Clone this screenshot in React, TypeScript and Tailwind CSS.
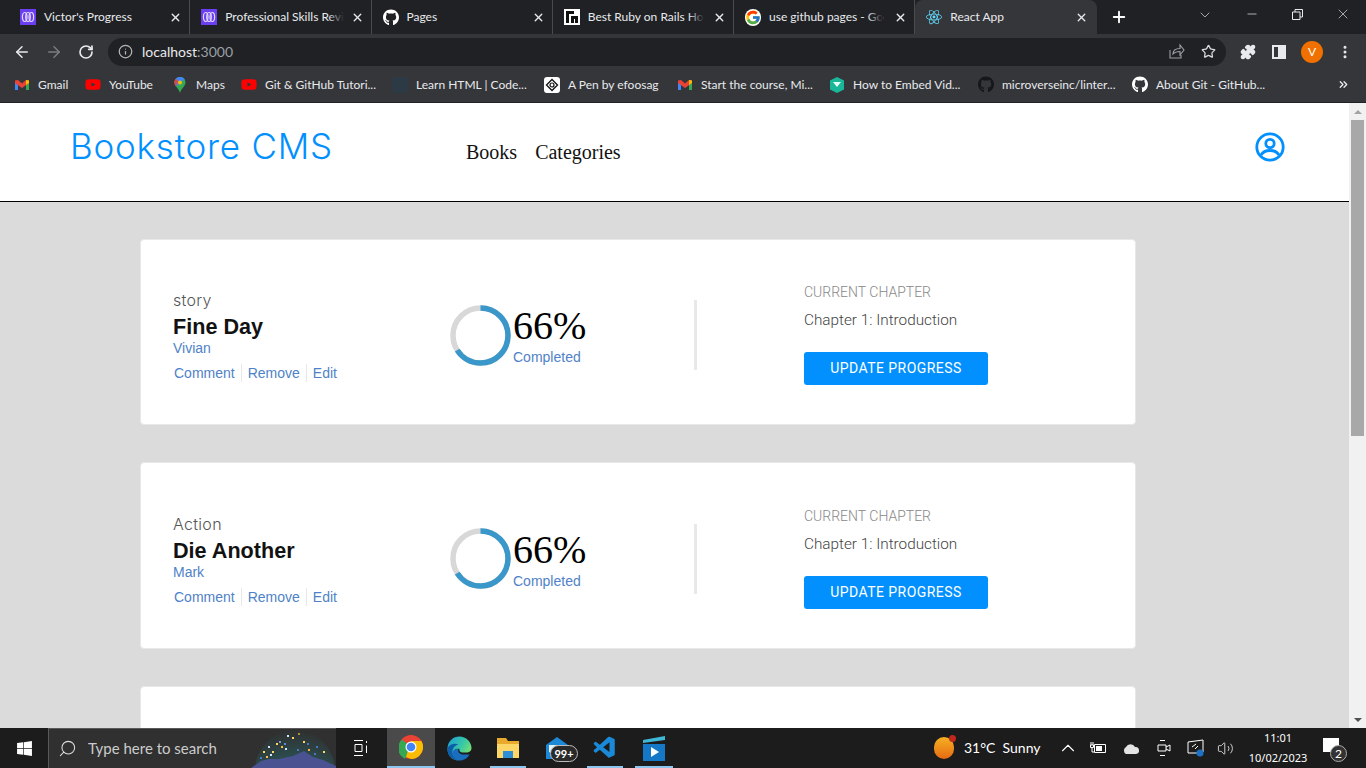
import { ReactNode } from 'react'
import { ArrowLeft, ArrowRight, RotateCw, Info, Star, Puzzle, MoreVertical, X, Plus, ChevronDown, Minus, ChevronsRight, Search, ChevronUp, Volume2 } from 'lucide-react'
import { FaGithub, FaWindows, FaYoutube } from 'react-icons/fa'
import { FcGoogle } from 'react-icons/fc'
import { SiReact } from 'react-icons/si'
import { VscVscode } from 'react-icons/vsc'

const ui = "font-['Lato',sans-serif]"

function Muo() {
    return (
        <svg width="16" height="16" viewBox="0 0 16 16">
            <rect width="16" height="16" fill="#6b3ff0" />
            <g fill="none" stroke="#e4dcff" strokeWidth="1.200">
                <ellipse cx="4.700" cy="8" rx="2.300" ry="4.500" />
                <ellipse cx="8" cy="8" rx="2.300" ry="4.500" />
                <ellipse cx="11.300" cy="8" rx="2.300" ry="4.500" />
            </g>
        </svg>
    )
}

function Rails() {
    return (
        <svg width="16" height="16" viewBox="0 0 16 16">
            <rect width="16" height="16" fill="#fff" />
            <path d="M2 14V2h8v3H5v9zM7 14V7h7v7h-3v-4H10v4z" fill="#111" />
        </svg>
    )
}

function Gmail() {
    return (
        <svg width="16" height="16" viewBox="0 0 16 16">
            <path d="M1 4v9h3V7z" fill="#4285f4" />
            <path d="M15 4v9h-3V7z" fill="#34a853" />
            <path d="M1 3.500 4 3l4 3.500L12 3l3 .5V6l-7 5-7-5z" fill="#ea4335" />
            <path d="M12 3l3 .5V6l-3 2z" fill="#fbbc04" />
        </svg>
    )
}

function MapsPin() {
    return (
        <svg width="16" height="18" viewBox="0 0 16 18">
            <path d="M8 1C4.500 1 2.500 3.500 2.500 6.500 2.500 10 6.500 12 8 17c1.500-5 5.500-7 5.500-10.500C13.500 3.500 11.500 1 8 1z" fill="#34a853" />
            <path d="M8 1c2 0 3.700.9 4.700 2.300L4 10.500c-1-1.200-1.500-2.500-1.500-4C2.500 3.500 4.500 1 8 1z" fill="#4285f4" />
            <path d="M3.800 2.800 6 5 4 10.300c-1-1.200-1.500-2.300-1.500-3.800 0-1.500.4-2.700 1.300-3.700z" fill="#ea4335" />
            <circle cx="8" cy="6.500" r="2" fill="#fbbc04" />
        </svg>
    )
}

function Pen() {
    return (
        <svg width="16" height="16" viewBox="0 0 16 16">
            <rect width="16" height="16" rx="3" fill="#fff" />
            <path d="M8 2.500 13.500 8 8 13.500 2.500 8z" fill="none" stroke="#111" strokeWidth="1.300" />
            <circle cx="8" cy="8" r="2" fill="none" stroke="#111" strokeWidth="1.200" />
        </svg>
    )
}

function Teal() {
    return (
        <svg width="16" height="18" viewBox="0 0 16 18">
            <path d="M8 1l7 3.500v9L8 17l-7-3.500v-9z" fill="#19b799" />
            <path d="M4 6h8L8 11z" fill="#e6fff8" />
        </svg>
    )
}

const tabs = [
    { icon: <Muo />, label: "Victor's Progress" },
    { icon: <Muo />, label: 'Professional Skills Revi', fade: true },
    { icon: <FaGithub size={17} color="#fff" />, label: 'Pages' },
    { icon: <Rails />, label: 'Best Ruby on Rails Ho', fade: true },
    { icon: <FcGoogle size={17} className="rounded-full bg-white" />, label: 'use github pages - Go', fade: true },
]

const bookmarks = [
    { icon: <Gmail />, label: 'Gmail', w: 71 },
    { icon: <FaYoutube size={17} color="#f00" />, label: 'YouTube', w: 87 },
    { icon: <MapsPin />, label: 'Maps', w: 69 },
    { icon: <FaYoutube size={17} color="#f00" />, label: 'Git & GitHub Tutori...', w: 151 },
    { icon: <span className="block w-4 h-4 bg-[#2b3a44] rounded-sm" />, label: 'Learn HTML | Code...', w: 152 },
    { icon: <Pen />, label: 'A Pen by efoosag', w: 133 },
    { icon: <Gmail />, label: 'Start the course, Mi...', w: 152 },
    { icon: <Teal />, label: 'How to Embed Vid...', w: 149 },
    { icon: <FaGithub size={17} color="#16171a" />, label: 'microverseinc/linter...', w: 154 },
    { icon: <FaGithub size={17} color="#fff" />, label: 'About Git - GitHub...', w: 150 },
]

function Tab({ icon, label, fade }: { icon: ReactNode; label: string; fade?: boolean }) {
    return (
        <div className="w-[181.25px] h-[34px] flex items-center pl-[11px] pr-[7px] border-r border-[#4a4b4f] shrink-0">
            <span className="w-4 h-4 flex items-center justify-center shrink-0">{icon}</span>
            <span className="relative ml-2 flex-1 text-xs text-[#e8eaed] whitespace-nowrap">
                <span className="relative inline-block">
                    {label}
                    {fade && <span className="absolute right-0 top-0 bottom-0 w-[16px] bg-gradient-to-r from-transparent to-[#202124]" />}
                </span>
            </span>
            <X size={13} strokeWidth={2.500} className="text-[#e8eaed] ml-1 shrink-0" />
        </div>
    )
}

function ChromeBar() {
    return (
        <div className={`${ui} shrink-0`}>
            <div className="h-[34px] bg-[#202124] flex pl-[9px]">
                {tabs.map((t, i) => <Tab key={i} {...t} />)}
                <div className="w-[182px] h-[34px] mt-0 bg-[#35363a] rounded-t-lg flex items-center pl-[11px] pr-[9px]">
                    <SiReact size={16} color="#61dafb" className="shrink-0" />
                    <span className="ml-2 flex-1 text-xs text-[#e8eaed]">React App</span>
                    <X size={13} strokeWidth={2.500} className="text-[#e8eaed]" />
                </div>
                <Plus size={18} strokeWidth={2.500} className="text-white ml-[13px] mt-2" />
                <div className="flex-1 flex items-start justify-end text-[#e8eaed]">
                    <ChevronDown size={16} strokeWidth={1} className="mt-[7px] mr-[32px]" />
                    <Minus size={14} strokeWidth={1.200} className="mt-[7px] mr-[33px]" />
                    <svg width="11" height="11" viewBox="0 0 11 11" className="mt-[9px] mr-[32px]" fill="none" stroke="#e8eaed">
                        <path d="M.5 3h7.500v7.500H.5zM3 3V.5h7.500V8H8" />
                    </svg>
                    <X size={16} strokeWidth={1} className="mt-[6px] mr-[15px]" />
                </div>
            </div>
            <div className="h-[33px] bg-[#35363a] flex items-center pt-[2px]">
                <ArrowLeft size={18} className="text-[#e8eaed] ml-[13px]" />
                <ArrowRight size={18} className="text-[#7b7c7f] ml-[14px]" />
                <RotateCw size={16} strokeWidth={2.500} className="text-[#e8eaed] ml-[15px]" />
                <div className="ml-[14px] w-[1118px] h-[28px] rounded-full bg-[#202124] flex items-center pl-[10px] pr-[10px]">
                    <Info size={15} className="text-[#b5b6b8]" />
                    <span className="ml-[9px] text-sm text-[#e8eaed]">localhost<span className="text-[#9aa0a6]">:3000</span></span>
                    <span className="flex-1" />
                    <svg width="17" height="17" viewBox="0 0 17 17" fill="none" stroke="#9aa0a6" strokeWidth="1.100" className="mr-[16px]">
                        <path d="M2 7v8h11v-3M5 11c0-3.500 3-5.500 7-5.500V2l4 5-4 5V8.500c-3 0-5.500 .8-7 2.500z" />
                    </svg>
                    <Star size={15} strokeWidth={2} className="text-[#dadce0]" />
                </div>
                <Puzzle size={16} fill="#e8eaed" className="text-[#e8eaed] ml-[14px]" />
                <span className="ml-[16px] w-[14px] h-[14px] border-2 border-[#e8eaed] flex justify-end">
                    <span className="block w-[6px] bg-[#e8eaed]" />
                </span>
                <span className="ml-[15px] w-[22px] h-[22px] rounded-full bg-[#f07000] text-white text-xs flex items-center justify-center">V</span>
                <MoreVertical size={16} strokeWidth={2.500} className="text-[#e8eaed] ml-[14px]" />
            </div>
            <div className="h-[36px] bg-[#35363a] border-b border-[#202124] flex items-center pl-[14px] pr-[16px]">
                {bookmarks.map((b, i) => (
                    <div key={i} className="flex items-center shrink-0 whitespace-nowrap" style={{ width: b.w }}>
                        <span className="w-4 h-4 flex items-center justify-center shrink-0">{b.icon}</span>
                        <span className="ml-2 text-xs text-[#e8eaed]">{b.label}</span>
                    </div>
                ))}
                <span className="flex-1" />
                <ChevronsRight size={13} strokeWidth={2.500} className="text-[#e8eaed]" />
            </div>
        </div>
    )
}

function Ring() {
    return (
        <svg width="61" height="61" viewBox="0 0 61 61" className="shrink-0 -rotate-90">
            <circle cx="30.500" cy="30.500" r="27.500" fill="none" stroke="#d8d8d8" strokeWidth="5.500" />
            <circle cx="30.500" cy="30.500" r="27.500" fill="none" stroke="#3a97c9" strokeWidth="5.500" strokeDasharray="114 173" />
        </svg>
    )
}

function BookCard({ genre, title, author }: { genre: string; title: string; author: string }) {
    return (
        <section className="h-[186.4px] shrink-0 bg-white border border-[#e8e8e8] rounded-[4px] flex items-center pl-[32px]">
            <div className="w-[277px] pt-[8px] font-['Liberation_Sans',sans-serif]">
                <p className="font-['Inter',sans-serif] font-light text-base tracking-[0.3px] leading-[20px] text-[#555]">{genre}</p>
                <h2 className="font-bold text-[21.6px] leading-[26px] text-[#121212] mt-[4px]">{title}</h2>
                <p className="text-sm leading-[16px] text-[#4f82c7]">{author}</p>
                <div className="flex text-sm leading-[18px] text-[#4f82c7] mt-[8px] pl-[1px]">
                    <span className="pr-[6px] border-r border-[#e8e8e8]">Comment</span>
                    <span className="px-[6px] border-r border-[#e8e8e8]">Remove</span>
                    <span className="pl-[6px]">Edit</span>
                </div>
            </div>
            <div className="w-[244px] pt-[6px] flex items-center">
                <Ring />
                <div className="ml-[2px]">
                    <div className="font-['Liberation_Serif',serif] text-[40px] leading-[44px] text-black">66%</div>
                    <div className="font-['Liberation_Sans',sans-serif] text-sm leading-[18px] text-[#4f82c7]">Completed</div>
                </div>
            </div>
            <div className="w-[3px] h-[70px] mt-[6px] bg-[#e8e8e8]" />
            <div className="ml-[107px] pt-[4px] font-['Roboto',sans-serif]">
                <p className="font-light text-sm leading-[18px] text-[#888]">CURRENT CHAPTER</p>
                <p className="font-light text-[15.3px] leading-[20px] text-[#444] mt-[9px]">Chapter 1: Introduction</p>
                <button className="mt-[22px] w-[184px] h-[33px] pb-[1px] rounded-[3px] bg-[#0290ff] text-white text-sm tracking-[0.45px]">UPDATE PROGRESS</button>
            </div>
        </section>
    )
}

function Scrollbar() {
    return (
        <div className="w-[17px] bg-[#f1f1f1] shrink-0 flex flex-col items-center">
            <div className="h-[17px] flex items-center justify-center">
                <span className="w-0 h-0 border-x-[4px] border-x-transparent border-b-[4px] border-b-[#a3a3a3]" />
            </div>
            <div className="w-[13px] h-[316px] bg-[#a8a8a8]" />
            <span className="flex-1" />
            <div className="h-[17px] flex items-center justify-center">
                <span className="w-0 h-0 border-x-[4px] border-x-transparent border-t-[4px] border-t-[#505050]" />
            </div>
        </div>
    )
}

function UserIcon() {
    return (
        <svg width="30" height="30" viewBox="0 0 30 30" fill="none" stroke="#0290ff" strokeWidth="2.800">
            <circle cx="15" cy="15" r="13.200" />
            <circle cx="15" cy="11.500" r="4.200" />
            <path d="M6 23c2-3.500 5-4.500 9-4.500s7 1 9 4.500" />
        </svg>
    )
}

function Dome() {
    const dots = [
        [25, 14, '#ffd860'], [36, 6, '#cfe4ff'], [41, 8, '#ffd860'], [47, 4, '#b09030'], [33, 14, '#5a8ad8'], [30, 17, '#ffc040'],
        [17, 17, '#cfe4ff'], [21, 22, '#ffd860'], [12, 22, '#ffd860'], [28, 12, '#7a9ad0'], [52, 12, '#ffd860'], [34, 19, '#cfe4ff'],
        [56, 14, '#4a78c8'], [65, 17, '#4a78c8'], [46, 20, '#4a78c8'], [57, 20, '#ffb040'], [72, 22, '#ffd860'], [63, 24, '#4a78c8'],
        [9, 28, '#4a78c8'], [15, 27, '#ffc040'], [19, 25, '#cfe4ff'],
    ] as [number, number, string][]
    return (
        <svg width="85" height="39" viewBox="0 0 85 39" className="absolute right-0 top-0">
            <defs>
                <radialGradient id="dome" cx="50%" cy="100%" r="100%">
                    <stop offset="0%" stopColor="#3f7f7c" />
                    <stop offset="70%" stopColor="#2c4a4c" />
                    <stop offset="100%" stopColor="#303030" />
                </radialGradient>
            </defs>
            <ellipse cx="44" cy="42" rx="40" ry="41" fill="url(#dome)" />
            <path d="M0 39 10 32 18 30 28 30 42 27 53 22 62 28 72 31 85 37V39z" fill="#4a5292" />
            {dots.map(([x, y, c], i) => <rect key={i} x={x} y={y} width="2" height="2" fill={c} />)}
        </svg>
    )
}

function Taskbar() {
    const running = 'absolute left-[6px] right-[6px] bottom-0 h-[2px] bg-[#8cc5ee]'
    const apps = [
        { x: 'w-[48px] bg-[#4a4a4a] border-b-2 border-[#8cc5ee]', icon: (
            <svg width="24" height="24" viewBox="0 0 24 24">
                <circle cx="12" cy="12" r="12" fill="#ea4335" />
                <path d="M12 12 6 24A12 12 0 0 1 3 4.500z" fill="#34a853" />
                <path d="M12 24a12 12 0 0 0 10.400-18H12L7 22z" fill="#fbbc04" />
                <circle cx="12" cy="12" r="5.500" fill="#fff" />
                <circle cx="12" cy="12" r="4.300" fill="#4285f4" />
            </svg>
        ) },
        { x: 'w-[49px]', icon: (
            <svg width="25" height="25" viewBox="0 0 25 25">
                <defs>
                    <linearGradient id="edge" x1="0" y1="0" x2="1" y2="0.600">
                        <stop offset="0%" stopColor="#1a9ad8" />
                        <stop offset="60%" stopColor="#38c8a8" />
                        <stop offset="100%" stopColor="#7de06a" />
                    </linearGradient>
                </defs>
                <path d="M.5 12C1 5 6 .5 12.500 .5S24.500 6 24.500 12c0 3-2.500 4.500-5 4.500h-4C13 16.500 12 15 12.500 13 9 12 6 14 6 17.500c0 3 2 5.500 5 7C5 24 0 19 .5 12z" fill="url(#edge)" />
                <path d="M.5 12C3 8 8 7 11.500 8.500 8 9 5 12.500 5.500 17c.3 3.500 2.500 6 5.500 7.500C5 24 0 19 .5 12z" fill="#0c5ea8" />
                <path d="M11 24.500c-3.500-1.500-6-4.500-5.500-8 .5-2.500 3-4 6-3.500-1 3 1 5 4 5.500h7c-2 4-6.500 6.500-11.500 6z" fill="#1a6ec0" />
            </svg>
        ) },
        { x: 'w-[48px] relative', bar: true, icon: (
            <svg width="22" height="20" viewBox="0 0 22 20">
                <path d="M0 0h9l2 3h11v17H0z" fill="#e8a92d" />
                <path d="M0 6h22v14H0z" fill="#fcd768" />
                <path d="M6 13h10v7H6z" fill="#2f8fd6" />
            </svg>
        ) },
        { x: 'w-[49px] relative', icon: (
            <>
                <svg width="24" height="24" viewBox="0 0 24 24">
                    <path d="M1 9 12 1l11 8v14H1z" fill="#1b88d8" />
                    <path d="M4 9h16v7l-8 4-8-4z" fill="#e8f2fa" />
                </svg>
                <span className="absolute left-[18px] top-[17px] w-[28px] h-[17px] rounded-full bg-[#2a2a2a] border border-[#bbb] text-[11px] leading-[15px] text-white text-center font-bold">99+</span>
            </>
        ) },
        { x: 'w-[48px] relative', bar: true, icon: <VscVscode size={26} color="#1a8ad8" /> },
        { x: 'w-[50px] relative', bar: true, icon: (
            <svg width="26" height="28" viewBox="0 0 26 28">
                <path d="M2 6 24 2v4L2 9z" fill="#3fb8d8" />
                <path d="M2 10h22v17H2z" fill="#1578c7" />
                <path d="M10 13l8 5-8 5z" fill="#fff" />
            </svg>
        ) },
    ]
    return (
        <div className={`${ui} h-[40px] bg-[#1c1c1c] shrink-0 flex items-stretch text-white`}>
            <div className="w-[48px] flex items-center justify-center"><FaWindows size={17} /></div>
            <div className="w-[288px] bg-[#303030] border-t border-l border-[#5a5a5a] flex items-center pl-[9px] relative overflow-hidden">
                <Search size={19} strokeWidth={1.300} className="-scale-x-100 text-[#ddd]" />
                <span className="ml-[11px] text-[15px] text-[#ccc]">Type here to search</span>
                <Dome />
            </div>
            <div className="w-[51px] flex items-center justify-center pr-[2px]">
                <svg width="16" height="16" viewBox="0 0 16 16" fill="none" stroke="#fff">
                    <path d="M1 .5h9M1 15.500h9M2 4.500h7v7H2zM13.500 1v2M13.500 5.500V13" />
                </svg>
            </div>
            {apps.map((a, i) => (
                <div key={i} className={`${a.x} flex items-center justify-center`}>
                    {a.icon}
                    {a.bar && <span className={running} />}
                </div>
            ))}
            <span className="flex-1" />
            <div className="flex items-center pr-[18px]">
                <span className="relative w-[20px] h-[22px] rounded-full bg-gradient-to-b from-[#f5b020] to-[#e56a15] mr-[10px]">
                    <span className="absolute -top-[2px] -right-[2px] w-[7px] h-[7px] rounded-full bg-[#c0281c]" />
                </span>
                <span className="text-sm w-[93px] whitespace-pre">31°C  Sunny</span>
                <ChevronUp size={22} strokeWidth={1.200} className="mr-[11px]" />
                <svg width="16" height="14" viewBox="0 0 16 14" fill="none" stroke="#fff" className="mr-[16px]">
                    <path d="M4.500 3.500h11v8h-11zM1 1v3M3 1v3M.5 4h3v2.500h-3zM2 7v4h2" />
                    <path d="M6 5h6v5H6z" fill="#fff" stroke="none" />
                </svg>
                <svg width="18" height="12" viewBox="0 0 18 12" className="mr-[17px]">
                    <path d="M4 12a4 4 0 0 1 0-7 5 5 0 0 1 9 0 3.500 3.500 0 0 1 1 7z" fill="#e4e4e4" />
                </svg>
                <svg width="14" height="18" viewBox="0 0 14 18" fill="none" stroke="#fff" className="mr-[16px]">
                    <path d="M3 1.500h5M3 16.500h5M1 6h8v6H1zM9 8l4-2v6l-4-2" />
                </svg>
                <svg width="18" height="18" viewBox="0 0 18 18" fill="none" stroke="#fff" className="mr-[12px]">
                    <path d="M1 3 16 1v12l-6 1H1z" />
                    <path d="M5 8l4-3M8 10l3-3" />
                    <circle cx="13" cy="14" r="3.500" fill="#1b70c8" stroke="none" />
                </svg>
                <Volume2 size={17} strokeWidth={1.100} className="mr-[14px]" />
                <div className="w-[60px] text-center font-['Noto_Sans',sans-serif] text-[11px] leading-[20px] mr-[14px]">
                    <div>11:01</div>
                    <div>10/02/2023</div>
                </div>
                <span className="relative w-[26px] h-[24px]">
                    <span className="absolute left-[1px] top-[2px] w-[16px] h-[14px] bg-white" />
                    <span className="absolute left-[8px] top-[9px] w-[17px] h-[17px] rounded-full bg-[#333] border border-[#aaa] text-[12px] leading-[15px] text-center">2</span>
                </span>
            </div>
        </div>
    )
}

export default function App() {
    return (
        <div className="w-[1366px] h-[768px] overflow-hidden flex flex-col">
            <ChromeBar />
            <div className="flex-1 flex min-h-0">
                <main className="flex-1 min-w-0 bg-[#dbdbdb] overflow-hidden">
                    <header className="h-[99px] bg-white border-b border-black flex items-center pl-[70px] pr-[64px]">
                        <h1 className="w-[396px] font-['Inter',sans-serif] font-light text-[35px] tracking-[0.77px] text-[#0290ff] -mt-[12px]">Bookstore CMS</h1>
                        <nav className="flex gap-[18px] font-['Liberation_Serif',serif] text-xl text-[#121212]">
                            <a>Books</a>
                            <a>Categories</a>
                        </nav>
                        <span className="flex-1" />
                        <span className="-mt-[10px]"><UserIcon /></span>
                    </header>
                    <div className="flex flex-col gap-[37px] pt-[37px] pl-[140px] w-[1136px]">
                        <BookCard genre="story" title="Fine Day" author="Vivian" />
                        <BookCard genre="Action" title="Die Another" author="Mark" />
                        <section className="h-[186.4px] shrink-0 bg-white border border-[#e8e8e8] rounded-[4px]" />
                    </div>
                </main>
                <Scrollbar />
            </div>
            <Taskbar />
        </div>
    )
}
